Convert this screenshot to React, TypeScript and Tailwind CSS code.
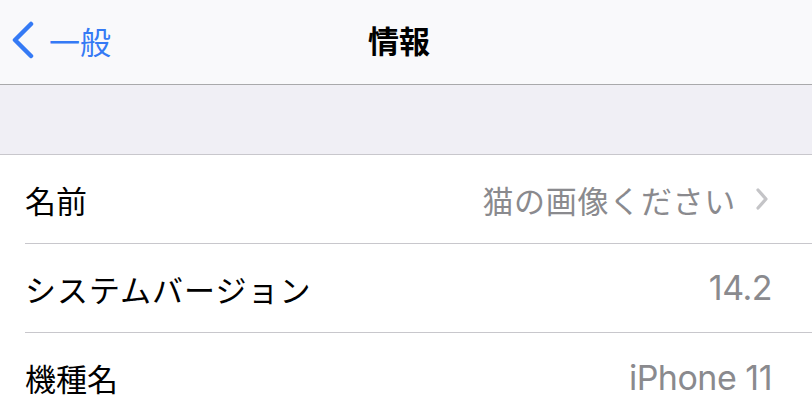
import React from "react";

const jp = { fontFamily: '"Noto Sans CJK JP", "Noto Sans", sans-serif' };
const lat = { fontFamily: 'Inter, "Noto Sans CJK JP", sans-serif' };

function Row({ label, value, latin, chevron, last, wide }: { label: string; value: string; latin?: boolean; chevron?: boolean; last?: boolean; wide?: boolean }) {
  return (
    <div className="pl-[25px] bg-white">
      <div className={`h-[89px] flex items-center pr-[40px] ${last ? "" : "border-b border-[#c8c7cc]"}`}>
        <span className={`text-[31px] leading-none text-black ${wide ? "tracking-[1px]" : ""}`} style={jp}>{label}</span>
        <div className="ml-auto flex items-center">
          {latin ? (
            <span className="text-[34px] leading-none text-[#8a8a8e] tracking-[-0.5px]" style={lat}>{value}</span>
          ) : (
            <span className="text-[31px] leading-none text-[#8a8a8e] tracking-[0.7px]" style={jp}>{value}</span>
          )}
          {chevron && (
            <svg width="16" height="24" viewBox="0 0 16 24" className="ml-[18px] mr-[2px]">
              <path d="M4 3 L12 12 L4 21" fill="none" stroke="#c4c4c7" strokeWidth="3.2" strokeLinecap="round" strokeLinejoin="round" />
            </svg>
          )}
        </div>
      </div>
    </div>
  );
}

export default function App() {
  return (
    <div className="w-[812px] h-[408px] overflow-hidden bg-white">
      <div className="h-[85px] bg-[#f9f9fb] border-b border-[#a9a9ab] relative flex items-center justify-center">
        <div className="absolute left-[11px] top-0 h-[80px] flex items-center">
          <svg width="24" height="38" viewBox="0 0 24 38">
            <path d="M20 3 L4 19 L20 35" fill="none" stroke="#357af5" strokeWidth="4.5" strokeLinecap="round" strokeLinejoin="round" />
          </svg>
          <span className="ml-[14px] text-[31px] leading-none text-[#357af5]" style={jp}>一般</span>
        </div>
        <span className="mr-[14px] mb-[5px] text-[31px] leading-none font-bold text-black" style={jp}>情報</span>
      </div>
      <div className="h-[70px] bg-[#f0eff5] border-b border-[#c8c7cc]" />
      <Row label="名前" value="猫の画像ください" chevron />
      <Row label="システムバージョン" value="14.2" latin wide />
      <Row label="機種名" value="iPhone 11" latin last />
    </div>
  );
}
